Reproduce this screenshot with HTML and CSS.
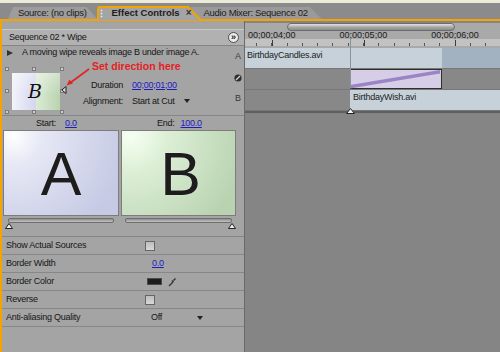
FILE: index.html
```html
<!DOCTYPE html>
<html>
<head>
<meta charset="utf-8">
<link rel="stylesheet" href="styles.css">
</head>
<body>
<div class="strip"></div>
<div class="tabbar">
  <div class="tab tab-source">Source: (no clips)</div>
  <div class="tab tab-active">
    <svg class="tab-shape" width="105" height="14" viewBox="0 0 105 14"><path d="M1 14 V3 Q1 1 3 1 H91 L104 14" fill="#a4a4a4" stroke="#f5a300" stroke-width="2"/></svg>
    <span class="grip"></span><span class="tab-title">Effect Controls</span><span class="tab-close">&#215;</span>
  </div>
  <div class="tab tab-mixer">Audio Mixer: Sequence 02</div>
</div>
<div class="panel">
  <div class="ec">
    <div class="ec-gap"></div>
    <div class="ec-hdr"><span>Sequence 02 * Wipe</span><span class="more">&#187;</span></div>
    <div class="upper">
      <div class="upper-main">
        <div class="desc"><span class="tri"></span><span>A moving wipe reveals image B under image A.</span></div>
        <div class="setup">
          <div class="thumbwrap">
            <div class="thumb"><span class="thumb-b">B</span></div>
            <span class="h h-tl"></span><span class="h h-tc"></span><span class="h h-tr"></span>
            <span class="h h-ml"></span><span class="h h-mr"></span>
            <span class="h h-bl"></span><span class="h h-bc"></span><span class="h h-br"></span>
            <svg class="dir" width="6" height="8" viewBox="0 0 6 8"><path d="M5 0.5 L0.8 4 L5 7.5 Z" fill="#d8d8d8" stroke="#222" stroke-width="1"/></svg>
          </div>
          <div class="params">
            <span class="plabel">Duration</span><span class="link">00;00;01;00</span>
            <span class="plabel">Alignment:</span><span class="pval">Start at Cut<span class="dd"></span></span>
          </div>
          <div class="note">Set direction here</div>
          <svg class="note-arrow" width="36" height="34" viewBox="0 0 36 34"><line x1="29" y1="9" x2="10" y2="23" stroke="#e52222" stroke-width="1.6"/><path d="M6.5 25.5 L9.5 19.5 L13 23.5 Z" fill="#e52222"/></svg>
        </div>
      </div>
      <div class="tlabels">
        <span>A</span>
        <span><svg width="8" height="8" viewBox="0 0 8 8"><circle cx="4" cy="4" r="3.6" fill="#2e2e2e"/><line x1="2" y1="6" x2="6" y2="2" stroke="#cfcfcf" stroke-width="1.2"/></svg></span>
        <span>B</span>
      </div>
    </div>
    <div class="se">
      <div class="se-cell se-start"><span>Start:</span><span class="link">0.0</span></div>
      <div class="se-cell se-end"><span>End:</span><span class="link">100.0</span></div>
    </div>
    <div class="previews">
      <div class="pv pv-a">A</div>
      <div class="pv pv-b">B</div>
    </div>
    <div class="sliders">
      <div class="slider s-a"><div class="track"></div><svg class="thumbtri" width="8" height="6" viewBox="0 0 8 6"><path d="M4 0.5 L7.5 5.5 H0.5 Z" fill="#f0f0f0" stroke="#222" stroke-width="1"/></svg></div>
      <div class="slider s-b"><div class="track"></div><svg class="thumbtri" width="8" height="6" viewBox="0 0 8 6"><path d="M4 0.5 L7.5 5.5 H0.5 Z" fill="#f0f0f0" stroke="#222" stroke-width="1"/></svg></div>
    </div>
    <div class="rows">
      <div class="row"><span class="label">Show Actual Sources</span><span class="cb"></span></div>
      <div class="row"><span class="label">Border Width</span><span class="link bw">0.0</span></div>
      <div class="row"><span class="label">Border Color</span><span class="swatch"></span><svg class="dropper" width="9" height="10" viewBox="0 0 9 10"><path d="M1 9 L5 5" stroke="#333" stroke-width="1.3"/><path d="M5 3 L7 1 L8 2 L6 4 Z" fill="#333"/><path d="M4 3.5 L5.5 5" stroke="#333" stroke-width="1.5"/></svg></div>
      <div class="row"><span class="label">Reverse</span><span class="cb"></span></div>
      <div class="row"><span class="label">Anti-aliasing Quality</span><span class="off">Off</span><span class="dd dd-off"></span></div>
    </div>
  </div>
  <div class="tl">
    <div class="ruler">
      <div class="zoombar"></div>
      <div class="tcodes"><span>00;00;04;00</span><span>00;00;05;00</span><span>00;00;06;00</span></div>
      <div class="ticks"></div>
    </div>
    <div class="trk">
      <div class="clip c-candles">BirthdayCandles.avi</div>
      <div class="c-dark"></div>
    </div>
    <div class="trk">
      <div class="gapcell"></div>
      <div class="trans"><svg width="92" height="19" viewBox="0 0 92 19" preserveAspectRatio="none"><path d="M0 15 L91 0 L91 3.5 L0 18.5 Z" fill="#9a84c6"/></svg></div>
      <div class="rest"></div>
    </div>
    <div class="trk">
      <div class="gapcell"></div>
      <div class="clip c-wish">BirthdayWish.avi</div>
    </div>
    <div class="tl-line"></div>
    <div class="playhead"></div>
    <svg class="marker" width="9" height="6" viewBox="0 0 9 6"><path d="M4.5 0.5 L8.5 5.5 H0.5 Z" fill="#f4f4f4" stroke="#222" stroke-width="1"/></svg>
  </div>
</div>
</body>
</html>
```
FILE: styles.css
```css
* { box-sizing: border-box; }
html, body { margin: 0; padding: 0; }
body {
  width: 500px; height: 352px; overflow: hidden;
  background: #858585;
  font-family: "Liberation Sans", Arial, sans-serif;
  font-size: 9px; letter-spacing: -0.25px; line-height: 1; color: #161616;
}
.strip { height: 3px; background: #ecebd9; }
.tabbar {
  height: 16px; background: #8b8b8b;
  display: flex; align-items: flex-end; padding-left: 8px;
}
.tab {
  height: 12px; display: flex; align-items: center; position: relative;
  white-space: nowrap; font-size: 9.5px; letter-spacing: -0.3px; color: #1c1c1c;
}
.tab-source {
  background: #9d9d9d; padding: 0 11px 0 10px;
  clip-path: polygon(5px 0, calc(100% - 11px) 0, 100% 100%, 0 100%);
}
.tab-active {
  width: 105px; height: 13px; margin-left: -1px; z-index: 2; padding-left: 3px;
}
.tab-shape { position: absolute; left: 0; top: 0; z-index: -1; }
.grip {
  width: 3px; height: 9px; margin-top: 1px;
  background-image: radial-gradient(circle, #e8e8e8 0.8px, transparent 1.1px);
  background-size: 3px 3px;
}
.tab-title {
  font-weight: bold; font-size: 9.5px; letter-spacing: 0;
  margin-left: 9px; margin-top: 1px;
}
.tab-close { margin-left: 6px; font-size: 10px; font-weight: bold; color: #333; margin-top: 1px; }
.tab-mixer {
  background: #9a9a9a; margin-left: -11px; padding: 0 14px 0 13px; z-index: 1;
  clip-path: polygon(0 0, calc(100% - 12px) 0, 100% 100%, 0 100%);
}

.panel {
  display: flex; height: 333px;
  border-top: 2px solid #f5a300; border-left: 2px solid #f5a300;
}
.ec { width: 242px; background: #a4a4a4; display: flex; flex-direction: column; }
.ec-gap { height: 8px; }
.ec-hdr {
  height: 17px; background: #b1b1b1;
  border-top: 1px solid #c9c9c9; border-bottom: 1px solid #858585;
  display: flex; align-items: center; justify-content: space-between;
  padding: 0 5px 0 7px;
}
.more {
  width: 11px; height: 11px; border-radius: 50%;
  border: 1px solid #4a4a4a; background: #ececec;
  display: flex; align-items: center; justify-content: center;
  font-size: 9px; font-weight: bold; color: #222; letter-spacing: 0;
  padding-bottom: 1px;
}
.upper { display: flex; height: 70px; border-bottom: 1px solid #878787; }
.upper-main { flex: 1; display: flex; flex-direction: column; }
.desc { height: 13px; display: flex; align-items: center; padding-left: 5px; gap: 9px; white-space: nowrap; }
.tri {
  width: 0; height: 0;
  border-left: 6px solid #333; border-top: 3.5px solid transparent; border-bottom: 3.5px solid transparent;
}
.setup { position: relative; flex: 1; display: flex; }
.thumbwrap { position: relative; width: 66px; }
.thumb {
  margin: 14px 0 0 10px; width: 48px; height: 37px;
  background:
    linear-gradient(to bottom, rgba(255,255,255,0.35), rgba(255,255,255,0) 60%),
    linear-gradient(to right, #f2f3fb, #d3d6ee 50%, #dcebd4 50%, #b9d3b0);
  display: flex; align-items: center; justify-content: center;
}
.thumb-b {
  font-family: "DejaVu Serif", "Liberation Serif", serif; font-style: italic;
  font-size: 19px; color: #111; margin-left: -2px; letter-spacing: 0;
}
.h {
  position: absolute; width: 4px; height: 4px;
  background: #cfcfcf; border: 1px solid #7a7a7a;
}
.h-tl { left: 3px; top: 8px; } .h-tc { left: 30px; top: 8px; } .h-tr { left: 58px; top: 8px; }
.h-ml { left: 3px; top: 30px; } .h-mr { left: 58px; top: 30px; }
.h-bl { left: 3px; top: 51px; } .h-bc { left: 30px; top: 51px; } .h-br { left: 58px; top: 51px; }
.dir { position: absolute; left: 59px; top: 27px; }
.params {
  display: grid; grid-template-columns: 48px auto; column-gap: 9px;
  grid-auto-rows: 16px; align-items: center; align-self: flex-start;
  margin: 18px 0 0 7px; white-space: nowrap;
}
.plabel { text-align: right; }
.pval { display: flex; align-items: center; }
.link { color: #1c1cc2; text-decoration: underline; }
.dd {
  width: 0; height: 0; margin-left: 9px;
  border-top: 4px solid #222; border-left: 3.5px solid transparent; border-right: 3.5px solid transparent;
}
.note {
  position: absolute; left: 90px; top: 2px; white-space: nowrap;
  font-weight: bold; font-size: 10.5px; letter-spacing: 0; color: #e52222;
}
.note-arrow { position: absolute; left: 58px; top: 1px; }
.tlabels { width: 12px; display: flex; flex-direction: column; font-size: 9px; color: #3a3a3a; }
.tlabels span { height: 21px; display: flex; align-items: center; justify-content: center; }

.se {
  height: 14px; display: grid; grid-template-columns: 116px 115px; column-gap: 2px;
  padding-left: 1px; align-items: center;
}
.se-cell { display: flex; gap: 9px; }
.se-start { padding-left: 33px; }
.se-end { padding-left: 36px; gap: 6px; }
.previews {
  height: 86px; display: grid; grid-template-columns: 116px 115px; column-gap: 2px; padding-left: 1px;
}
.pv {
  border: 1px solid #7c7c7c;
  display: flex; align-items: center; justify-content: center;
  font-size: 61px; letter-spacing: 0; color: #1d1d1d;
  text-shadow: 0 0 1px #ffffff;
  padding-top: 2px;
}
.pv-a { background: radial-gradient(circle at 8% 6%, #ffffff 0, #e6e8f5 22%, #c6cae4 85%); }
.pv-b { background: radial-gradient(circle at 8% 6%, #f6fff2 0, #dcefd5 28%, #b9d3b1 88%); padding-left: 4px; }
.sliders {
  height: 21px; display: grid; grid-template-columns: 116px 115px; column-gap: 2px;
  padding-left: 1px; border-bottom: 1px solid #858585;
}
.slider { position: relative; }
.track {
  height: 5px; margin-top: 2px; border-radius: 2px;
  background: linear-gradient(#8e8e8e, #c4c4c4); border: 1px solid #6e6e6e;
}
.s-a .track { margin-left: 5px; width: 106px; }
.s-b .track { margin-left: 4px; width: 107px; }
.thumbtri { position: absolute; top: 7px; }
.s-a .thumbtri { left: 2px; }
.s-b .thumbtri { left: 107px; }
.row {
  height: 18px; display: flex; align-items: center; padding-left: 4px;
  border-bottom: 1px solid #878787; white-space: nowrap;
}
.label { width: 139px; }
.cb {
  width: 10px; height: 10px; border: 1px solid #666;
  background: linear-gradient(#bdbdbd, #d8d8d8);
}
.bw { margin-left: 7px; }
.swatch { width: 15px; height: 7px; margin-left: 2px; background: #1c1c1c; border: 1px solid #4a4a4a; }
.dropper { margin-left: 6px; }
.off { margin-left: 6px; }
.dd-off { margin-left: 35px; }

.tl { flex: 1; position: relative; border-left: 1px solid #6a6a6a; background: #858585; }
.ruler { height: 25px; background: #a9a9a9; }
.zoombar {
  margin: 2px 0 0 42px; width: 168px; height: 8px; border-radius: 4px;
  background: linear-gradient(#e2e2e2, #a6a6a6 55%, #8c8c8c);
  border: 1px solid #6c6c6c;
}
.tcodes {
  height: 8px; display: flex; gap: 43.7px; padding-left: 2.7px;
  font-size: 9px; letter-spacing: 0; line-height: 8px; color: #1a1a1a;
}
.tcodes span { width: 48px; text-align: center; white-space: nowrap; }
.ticks {
  height: 7px;
  background-color: #c2c2c2;
  background-image:
    repeating-linear-gradient(to right, #3a3a3a 0 1px, transparent 1px 91.7px),
    repeating-linear-gradient(to right, #555 0 1px, transparent 1px 15.283px);
  background-size: 100% 6px, 100% 3px;
  background-position: 26.7px bottom, 11.4px bottom;
  background-repeat: no-repeat, no-repeat;
}
.trk { height: 21px; display: flex; border-bottom: 1px solid #777; background: #888; }
.clip { background: #c6d1da; padding: 3px 0 0 2px; white-space: nowrap; color: #1e1e1e; }
.c-candles { width: 197px; }
.c-dark { flex: 1; background: #a2b2c1; }
.gapcell { width: 105px; }
.trans {
  width: 92px; background: #d6cde7;
  border-top: 1px solid #2e2e2e; border-bottom: 1px solid #2e2e2e; border-right: 1px solid #2e2e2e;
  display: flex;
}
.trans svg { display: block; }
.rest { flex: 1; }
.c-wish { flex: 1; padding-left: 3px; }
.tl-line { height: 2px; background: #5f5f5f; }
.playhead { position: absolute; left: 105px; top: 18px; width: 1px; height: 49px; background: #8894a0; }
.marker { position: absolute; left: 101px; top: 87px; }
```
